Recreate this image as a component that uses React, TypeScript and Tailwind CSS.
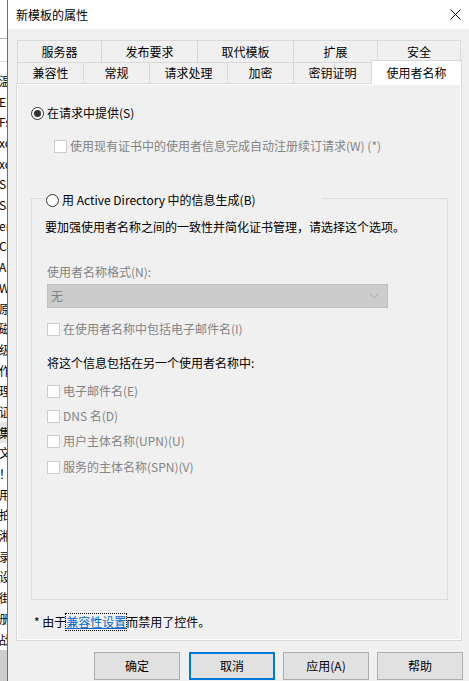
import React from "react";

const stripWords = [
  "温度", "EFS", "Fs", "xo", "xo", "SS", "SS", "er", "CC", "AS", "We", "原", "磁", "级",
  "作", "理", "证", "集", "文", "！", "用", "拍", "湘", "录", "设", "街", "册", "战",
];

const Radio = ({ checked }: { checked?: boolean }) => (
  <span className="w-[13px] h-[13px] rounded-full border border-[#333333] bg-white flex items-center justify-center shrink-0">
    {checked && <span className="w-[7px] h-[7px] rounded-full bg-[#333333]" />}
  </span>
);

const Check = () => (
  <span className="w-[13px] h-[13px] border border-[#cccccc] bg-white shrink-0" />
);

const DisabledCheck = ({ label, className = "" }: { label: string; className?: string }) => (
  <div className={`h-[16px] flex items-center gap-[3px] ${className}`}>
    <Check />
    <span className="text-[#838383]">{label}</span>
  </div>
);

const Tab = ({ label, w, first }: { label: string; w: string; first?: boolean }) => (
  <div
    className={`${w} h-full border-t border-l border-r border-[#d9d9d9] bg-[#f0f0f0] flex items-center justify-center ${first ? "" : "-ml-px"}`}
  >
    {label}
  </div>
);

const Btn = ({ label, focus, className = "" }: { label: string; focus?: boolean; className?: string }) => (
  <button
    className={`w-[86px] h-[28px] bg-[#e1e1e1] flex items-center justify-center ${focus ? "border-2 border-[#0078d7]" : "border border-[#adadad]"} ${className}`}
  >
    {label}
  </button>
);

export default function App() {
  return (
    <div className="w-[469px] h-[681px] flex overflow-hidden text-[12px] leading-none text-black font-['Noto_Sans_CJK_SC','Noto_Sans',sans-serif]">
      {/* window behind */}
      <div className="w-[7px] h-full bg-white flex flex-col overflow-hidden shrink-0">
        <div className="h-[38px]" />
        <div className="h-px bg-[#b4b4b4]" />
        <div className="h-[22px]" />
        <div className="h-px bg-[#dcdcdc]" />
        <div className="pt-[8.65px] flex flex-col">
          {stripWords.map((w, i) => (
            <div
              key={i}
              className={`h-[20.7px] flex items-center whitespace-nowrap -ml-px ${w === "集" ? "bg-[#e5e5e5]" : ""}`}
            >
              {w}
            </div>
          ))}
        </div>
        <div className="flex-1 bg-[#cdcdcd]" />
      </div>
      <div className="w-px h-full bg-[#6e6e6e] shrink-0" />

      {/* dialog */}
      <div className="flex-1 h-full flex flex-col bg-[#f0f0f0]">
        <div className="h-[29px] bg-white flex items-center justify-between pl-[8px] pr-[8px]">
          <span>新模板的属性</span>
          <svg width="11" height="11" viewBox="0 0 11 11">
            <path d="M0.5 0.5 L10.5 10.5 M10.5 0.5 L0.5 10.5" stroke="#000" strokeWidth="1" />
          </svg>
        </div>

        <div className="mt-[11px] pl-[9px] flex flex-col">
          <div className="h-[22px] flex">
            <Tab label="服务器" w="w-[85px]" first />
            <Tab label="发布要求" w="w-[97px]" />
            <Tab label="取代模板" w="w-[97px]" />
            <Tab label="扩展" w="w-[85px]" />
            <Tab label="安全" w="w-[84px]" />
          </div>
          <div className="h-[21px] flex items-start">
            <Tab label="兼容性" w="w-[67px]" first />
            <Tab label="常规" w="w-[67px]" />
            <Tab label="请求处理" w="w-[79px]" />
            <Tab label="加密" w="w-[67px]" />
            <Tab label="密钥证明" w="w-[79px]" />
            <div className="relative z-10 -ml-px -mt-[2px] w-[91px] h-[24px] bg-white border-t border-l border-r border-[#d9d9d9] flex items-center justify-center">
              使用者名称
            </div>
          </div>
        </div>

        {/* tab page */}
        <div className="ml-[8px] w-[446px] h-[558px] border border-[#d9d9d9] shadow-[inset_1px_1px_0_#ffffff,inset_-1px_-1px_0_#ffffff] flex flex-col pl-[14px]">
          <div className="mt-[21px] h-[16px] flex items-center gap-[3px]">
            <Radio checked />
            <span>在请求中提供(S)</span>
          </div>
          <div className="mt-[17px] ml-[23px] h-[16px] flex items-center gap-[3px]">
            <Check />
            <span className="text-[#838383]">使用现有证书中的使用者信息完成自动注册续订请求(W) (*)</span>
          </div>

          <fieldset className="mt-[36px] w-[417px] h-[410px] border border-[#dcdcdc] pl-[15px]">
            <legend className="-ml-px w-[276px] h-[16px] relative top-[2px] flex items-center gap-[3px]">
              <Radio />
              <span>用 Active Directory 中的信息生成(B)</span>
            </legend>
            <div className="mt-[13px] -ml-[2px] h-[16px] flex items-center">
              要加强使用者名称之间的一致性并简化证书管理，请选择这个选项。
            </div>
            <div className="mt-[29px] h-[16px] flex items-center text-[#838383]">使用者名称格式(N):</div>
            <div className="mt-[4px] w-[341px] h-[24px] bg-[#cccccc] border border-[#bfbfbf] flex items-center justify-between pl-[3px] pr-[8px] text-[#838383]">
              <span>无</span>
              <svg width="10" height="6" viewBox="0 0 10 6">
                <path d="M0.5 0.5 L5 5 L9.5 0.5" fill="none" stroke="#a6a6a6" strokeWidth="1" />
              </svg>
            </div>
            <DisabledCheck className="mt-[13px]" label="在使用者名称中包括电子邮件名(I)" />
            <div className="mt-[18px] h-[16px] flex items-center">将这个信息包括在另一个使用者名称中:</div>
            <DisabledCheck className="mt-[12px]" label="电子邮件名(E)" />
            <DisabledCheck className="mt-[9px]" label="DNS 名(D)" />
            <DisabledCheck className="mt-[9px]" label="用户主体名称(UPN)(U)" />
            <DisabledCheck className="mt-[10px]" label="服务的主体名称(SPN)(V)" />
          </fieldset>

          <div className="mt-[14px] ml-[3px] h-[16px] flex items-center whitespace-nowrap">
            <span>*&nbsp;由于</span>
            <span className="text-[#0066cc] underline outline outline-1 outline-dotted outline-black py-[2px]">兼容性设置</span>
            <span>而禁用了控件。</span>
          </div>
        </div>

        <div className="mt-[11px] ml-[86px] flex gap-[8px]">
          <Btn label="确定" />
          <Btn label="取消" focus className="ml-px" />
          <Btn label="应用(A)" />
          <Btn label="帮助" />
        </div>
      </div>
    </div>
  );
}
